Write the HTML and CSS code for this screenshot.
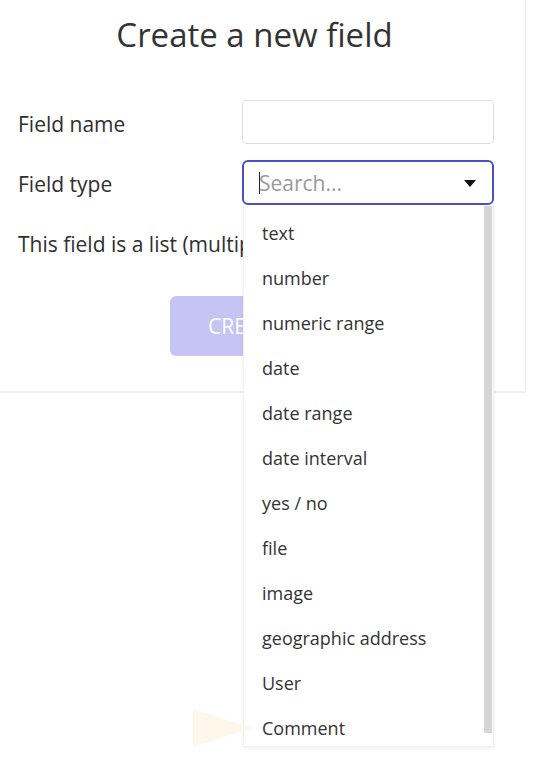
FILE: index.html
```html
<!DOCTYPE html>
<html>
<head>
<meta charset="utf-8">
<link rel="stylesheet" href="styles.css">
</head>
<body>
<div class="card">
  <h1 class="title">Create a new field</h1>
  <div class="row row-name">
    <label class="label">Field name</label>
    <div class="input"></div>
  </div>
  <div class="row row-type">
    <label class="label">Field type</label>
    <div class="select">
      <span class="caret"></span><span class="placeholder">Search...</span>
      <svg class="arrow" width="12" height="7" viewBox="0 0 12 7"><path d="M0 0 H12 L6 7 Z" fill="#111"/></svg>
      <div class="dropdown">
        <ul class="options">
          <li>text</li>
          <li>number</li>
          <li>numeric range</li>
          <li>date</li>
          <li>date range</li>
          <li>date interval</li>
          <li>yes / no</li>
          <li>file</li>
          <li>image</li>
          <li>geographic address</li>
          <li>User</li>
          <li>Comment</li>
        </ul>
        <div class="scrollbar"></div>
      </div>
    </div>
  </div>
  <div class="row row-list">
    <span class="label">This field is a list (multiple entries)</span>
  </div>
  <div class="actions">
    <button class="btn">CREATE</button>
  </div>
</div>
<div class="pointer"></div>
</body>
</html>
```
FILE: styles.css
```css
* { box-sizing: border-box; }
html, body { margin: 0; padding: 0; background: #fff; }
body {
  font-family: "Open Sans", "Noto Sans", sans-serif;
  color: #333;
  width: 551px;
  height: 767px;
  overflow: hidden;
  position: relative;
}
.card {
  width: 526px;
  height: 393px;
  border-right: 1px solid #ececec;
  border-bottom: 2px solid #efefef;
  padding-top: 13px;
}
.title {
  margin: 0;
  font-size: 33px;
  font-weight: 400;
  text-align: center;
  color: #333;
  line-height: 44px;
  padding-right: 16px;
}
.row {
  display: flex;
  align-items: center;
  padding-left: 18px;
  position: relative;
}
.label {
  font-size: 21px;
  color: #2f2f2f;
  width: 224px;
  white-space: nowrap;
}
.row-name { margin-top: 43px; }
.row-name .label { margin-top: 4px; }
.input {
  width: 252px;
  height: 44px;
  border: 1px solid #dedede;
  border-radius: 5px;
  background: #fff;
}
.row-type { margin-top: 16px; }
.row-type .label { margin-top: 2px; }
.select {
  position: relative;
  width: 252px;
  height: 45px;
  border: 2px solid #4b4fc4;
  border-radius: 6px;
  background: #fff;
  display: flex;
  align-items: center;
  padding-left: 15px;
  z-index: 2;
}
.caret {
  width: 1px;
  height: 22px;
  background: #222;
}
.placeholder {
  font-size: 21px;
  color: #9a9a9a;
  margin-left: -1px;
}
.arrow {
  position: absolute;
  right: 16px;
  top: 18px;
}
.row-list {
  margin-top: 17px;
  height: 43px;
}
.row-list .label { width: auto; }
.actions {
  padding-left: 170px;
  margin-top: 31px;
}
.btn {
  width: 180px;
  height: 60px;
  border: none;
  border-radius: 6px;
  background: #c5c4f5;
  color: #fff;
  font-family: inherit;
  font-size: 21px;
  text-align: left;
  padding-left: 38px;
}
.dropdown {
  position: absolute;
  left: -1px;
  top: 43px;
  width: 251px;
  height: 542px;
  background: #fff;
  border: 1px solid #f0f0f0;
  border-top: none;
  box-shadow: 0 2px 4px rgba(0,0,0,0.06);
}
.options {
  list-style: none;
  margin: 0;
  padding: 6px 0 0 18px;
}
.options li {
  font-size: 18px;
  line-height: 45px;
  color: #333;
}
.scrollbar {
  position: absolute;
  right: 1px;
  top: 1px;
  width: 8px;
  height: 527px;
  background: #d5d5d5;
}
.pointer {
  position: absolute;
  left: 193px;
  top: 709px;
  width: 0;
  height: 0;
  border-top: 19px solid transparent;
  border-bottom: 19px solid transparent;
  border-left: 59px solid #fdf1d6;
  opacity: 0.5;
  z-index: 3;
}
```
